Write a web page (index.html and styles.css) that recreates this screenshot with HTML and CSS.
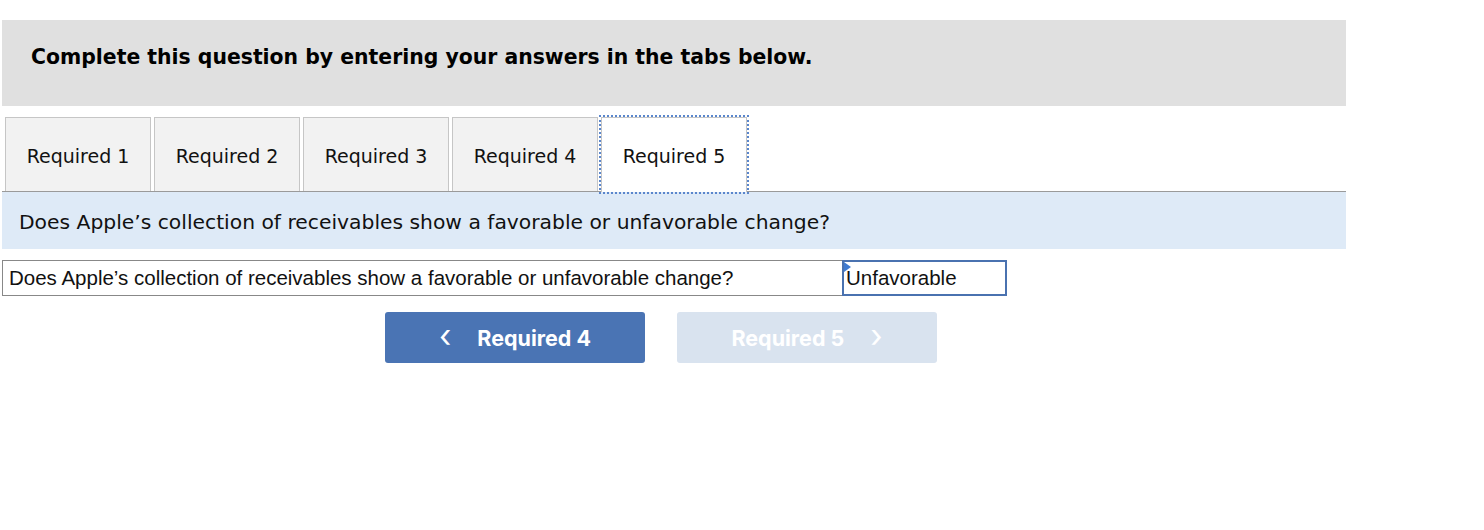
FILE: index.html
```html
<!DOCTYPE html>
<html>
<head>
<meta charset="utf-8">
<link rel="stylesheet" href="styles.css">
</head>
<body>
<div class="page">
  <div class="header">
    <h1 class="header-title">Complete this question by entering your answers in the tabs below.</h1>
  </div>
  <div class="tabs">
    <div class="tab">Required 1</div>
    <div class="tab">Required 2</div>
    <div class="tab">Required 3</div>
    <div class="tab">Required 4</div>
    <div class="tab tab-active">Required 5</div>
  </div>
  <div class="prompt">Does Apple’s collection of receivables show a favorable or unfavorable change?</div>
  <div class="answer-row">
    <div class="answer-label">Does Apple’s collection of receivables show a favorable or unfavorable change?</div>
    <div class="answer-value"><span class="corner"></span>Unfavorable</div>
  </div>
  <div class="nav">
    <button class="nav-btn nav-prev"><span class="chev">&lsaquo;</span>Required 4</button>
    <button class="nav-btn nav-next">Required 5<span class="chev">&rsaquo;</span></button>
  </div>
</div>
</body>
</html>
```
FILE: styles.css
```css
html, body {
  margin: 0;
  padding: 0;
  background: #ffffff;
}
.page {
  padding: 20px 0 0 2px;
  width: 1344px;
}
.header {
  background: #e0e0e0;
  height: 86px;
  display: flex;
  align-items: center;
  padding-left: 29px;
}
.header-title {
  margin: 0;
  font-family: "DejaVu Sans", Verdana, sans-serif;
  font-weight: bold;
  font-size: 20.4px;
  color: #000;
  position: relative;
  top: -6px;
}
.tabs {
  display: flex;
  gap: 3px;
  margin-top: 11px;
  padding-left: 3px;
  height: 74px;
  border-bottom: 1px solid #9a9a9a;
}
.tab {
  width: 146px;
  height: 74px;
  box-sizing: border-box;
  background: #f2f2f2;
  border: 1px solid #c6c6c6;
  border-bottom: none;
  display: flex;
  align-items: center;
  justify-content: center;
  padding-top: 3px;
  font-family: "DejaVu Sans", Verdana, sans-serif;
  font-size: 19px;
  color: #111;
}
.tab-active {
  background: #fff;
  height: 75px;
  padding-top: 2px;
  outline: 2px dotted #5a86cc;
  outline-offset: 0px;
  position: relative;
  z-index: 1;
}
.prompt {
  background: #deeaf7;
  height: 57px;
  display: flex;
  align-items: center;
  padding-left: 17px;
  padding-top: 2px;
  box-sizing: border-box;
  font-family: "DejaVu Sans", Verdana, sans-serif;
  font-size: 20.3px;
  color: #111;
}
.answer-row {
  display: flex;
  margin-top: 11px;
  height: 36px;
  width: 1005px;
}
.answer-label {
  width: 840px;
  box-sizing: border-box;
  border: 1px solid #888;
  border-right: none;
  display: flex;
  align-items: center;
  padding-left: 6px;
  font-family: "Liberation Sans", Arial, sans-serif;
  font-size: 20.5px;
  color: #111;
}
.answer-value {
  flex: 1;
  position: relative;
  box-sizing: border-box;
  border: 2px solid #4a72b0;
  display: flex;
  align-items: center;
  padding-left: 2px;
  font-family: "Liberation Sans", Arial, sans-serif;
  font-size: 20.5px;
  color: #111;
}
.corner {
  position: absolute;
  left: 0;
  top: 0;
  width: 0;
  height: 0;
  border-top: 5px solid transparent;
  border-bottom: 5px solid transparent;
  border-left: 7px solid #3f7ad0;
}
.nav {
  display: flex;
  gap: 32px;
  margin-top: 16px;
  padding-left: 383px;
}
.nav-btn {
  width: 260px;
  height: 51px;
  border: none;
  border-radius: 3px;
  font-family: Inter, "Open Sans", sans-serif;
  font-weight: 700;
  font-size: 21.5px;
  color: #fff;
  display: flex;
  align-items: center;
  justify-content: center;
  padding: 0;
}
.nav-prev {
  background: #4a74b4;
}
.nav-next {
  background: #d9e3ef;
}
.chev {
  font-weight: 400;
  font-size: 32px;
  line-height: 1;
  position: relative;
  top: -2px;
}
.nav-prev .chev {
  margin-right: 26px;
}
.nav-next .chev {
  margin-left: 26px;
}
```
